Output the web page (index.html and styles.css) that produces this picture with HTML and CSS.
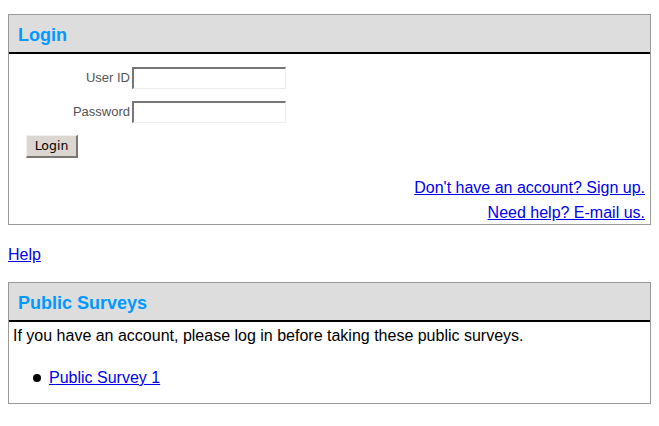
FILE: index.html
```html
<!DOCTYPE html>
<html>
<head>
<meta charset="utf-8">
<title>Login</title>
<link rel="stylesheet" href="styles.css">
</head>
<body>
<div class="panel login-panel">
  <div class="panel-head"><h2>Login</h2></div>
  <form class="login-form">
    <div class="field"><label for="uid">User ID</label><input id="uid" type="text"></div>
    <div class="field"><label for="pwd">Password</label><input id="pwd" type="password"></div>
    <div class="actions"><button type="button">Login</button></div>
    <div class="links">
      <a href="#">Don't have an account? Sign up.</a>
      <a href="#">Need help? E-mail us.</a>
    </div>
  </form>
</div>
<p class="help"><a href="#">Help</a></p>
<div class="panel surveys-panel">
  <div class="panel-head"><h2>Public Surveys</h2></div>
  <div class="panel-body">
    <p class="intro">If you have an account, please log in before taking these public surveys.</p>
    <ul class="survey-list">
      <li><a href="#">Public Survey 1</a></li>
    </ul>
  </div>
</div>
</body>
</html>
```
FILE: styles.css
```css
html, body {
  background: #fff;
}
body {
  margin: 8px;
  font-family: "Liberation Sans", Arial, sans-serif;
  font-size: 16px;
  line-height: 18px;
  color: #000;
}
a {
  color: #0000ee;
  text-decoration: underline;
}
.panel {
  border: 1px solid #999;
  background: #fff;
}
.login-panel {
  margin-top: 6px;
}
.panel-head {
  height: 37px;
  background: #ddd;
  border-bottom: 2px solid #000;
  display: flex;
  align-items: center;
  padding: 0 9px;
}
.panel-head h2 {
  margin: 0;
  font-size: 18px;
  font-weight: bold;
  color: #0099ff;
  line-height: 20px;
  position: relative;
  top: 1px;
}
.login-form {
  margin: 0;
  padding: 13px 0 0 0;
}
.field {
  display: flex;
  align-items: center;
  margin-bottom: 12px;
}
.field label {
  width: 121px;
  margin-right: 2px;
  text-align: right;
  font-size: 13px;
  color: #555;
}
.field input {
  box-sizing: border-box;
  width: 154px;
  height: 22px;
  margin: 0;
  padding: 1px 3px;
  border-style: solid;
  border-width: 2px 1px 1px 2px;
  border-color: #767676 #eeeeee #eeeeee #767676;
  background: #fff;
  font-family: "Liberation Sans", Arial, sans-serif;
  font-size: 13px;
  outline: none;
}
.actions {
  padding-left: 17px;
  line-height: 0;
}
.actions button {
  box-sizing: border-box;
  width: 52px;
  height: 23px;
  margin: 0;
  padding: 0;
  font-family: "DejaVu Sans", sans-serif;
  font-size: 12.5px;
  line-height: 14px;
  color: #000;
  background: #dcd6d1;
  border-style: solid;
  border-width: 1px 2px 2px 1px;
  border-color: #f2f0ee #7a7672 #7a7672 #f2f0ee;
}
.links {
  display: flex;
  flex-direction: column;
  align-items: flex-end;
  padding: 21px 5px 2px 0;
  gap: 7px;
}
.help {
  margin: 21px 0 0 0;
}
.surveys-panel {
  margin-top: 18px;
}
.panel-body {
  padding: 5px 4px 16px 4px;
}
.intro {
  margin: 0;
}
.survey-list {
  margin: 24px 0 0 0;
  padding: 0 0 0 36px;
  list-style: none;
}
.survey-list li {
  position: relative;
}
.survey-list li::before {
  content: "";
  position: absolute;
  left: -16px;
  top: 5px;
  width: 8px;
  height: 8px;
  border-radius: 50%;
  background: #000;
}
```
